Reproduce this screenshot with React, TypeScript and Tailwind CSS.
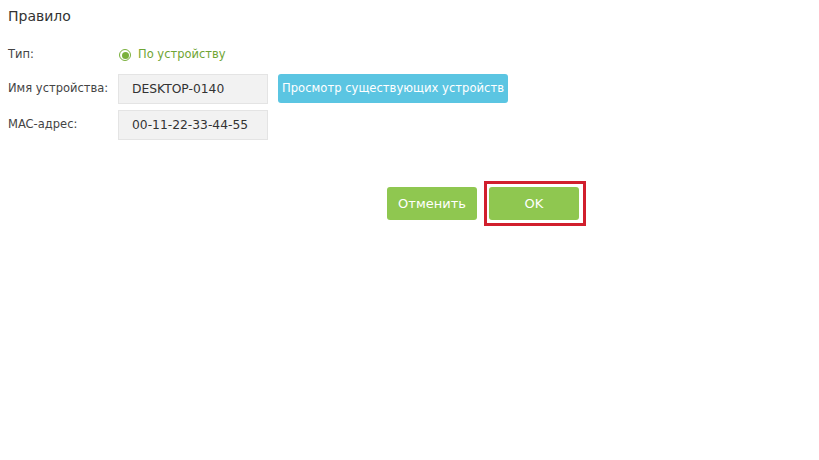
import React from "react";

export default function App() {
  const font = { fontFamily: '"DejaVu Sans", Verdana, sans-serif' };
  return (
    <div className="w-[819px] h-[460px] bg-white text-[#333] text-[11.5px] relative" style={font}>
      <div className="pl-[8px] pt-[7px] text-[14px] leading-[18px] text-[#333]">Правило</div>
      <div className="pl-[8px] pt-[22px] flex flex-col">
        <div className="flex items-center h-[16px]">
          <div className="w-[110px] text-[#444]">Тип:</div>
          <div className="flex items-center pl-[1px]">
            <span className="w-[12px] h-[12px] rounded-full border border-[#7ab03c] flex items-center justify-center">
              <span className="w-[7px] h-[7px] rounded-full bg-[#7ab03c]" />
            </span>
            <span className="ml-[7px] text-[#6fa534]">По устройству</span>
          </div>
        </div>
        <div className="flex items-center mt-[11px]">
          <div className="w-[110px] text-[#444]">Имя устройства:</div>
          <div className="w-[150px] h-[30px] bg-[#f2f2f2] border border-[#e4e4e4] flex items-center pl-[13px] text-[#333] text-[12.3px]">
            DESKTOP-0140
          </div>
          <button className="ml-[10px] w-[230px] h-[29px] rounded-[3px] bg-[#5bc5e2] text-white text-[11.6px] flex items-center justify-center self-start" style={font}>
            Просмотр существующих устройств
          </button>
        </div>
        <div className="flex items-center mt-[6px]">
          <div className="w-[110px] text-[#444]">MAC-адрес:</div>
          <div className="w-[150px] h-[30px] bg-[#f2f2f2] border border-[#e4e4e4] flex items-center pl-[13px] text-[#333] text-[12.3px]">
            00-11-22-33-44-55
          </div>
        </div>
        <div className="flex mt-[47px] pl-[379px] gap-[12px]">
          <button className="w-[90px] h-[33px] rounded-[3px] bg-[#8fc750] text-white text-[13px] flex items-center justify-center" style={font}>
            Отменить
          </button>
          <div className="relative">
            <button className="w-[90px] h-[33px] rounded-[3px] bg-[#8fc750] text-white text-[13px] flex items-center justify-center" style={font}>
              OK
            </button>
            <div className="absolute left-[-5px] right-[-7px] top-[-6px] bottom-[-6px] border-[3px] border-[#d11f2d] pointer-events-none" />
          </div>
        </div>
      </div>
    </div>
  );
}
